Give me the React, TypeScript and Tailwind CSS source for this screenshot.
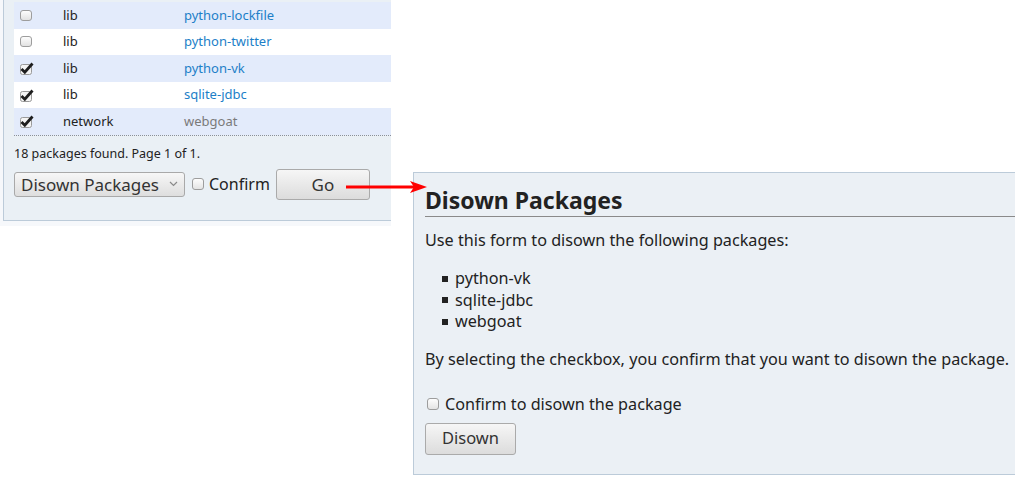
const rows = [
  { checked: false, category: 'lib', name: 'python-lockfile', muted: false },
  { checked: false, category: 'lib', name: 'python-twitter', muted: false },
  { checked: true, category: 'lib', name: 'python-vk', muted: false },
  { checked: true, category: 'lib', name: 'sqlite-jdbc', muted: false },
  { checked: true, category: 'network', name: 'webgoat', muted: true },
];

const selected = ['python-vk', 'sqlite-jdbc', 'webgoat'];

function Box({ checked }: { checked: boolean }) {
  if (checked) {
    return (
      <svg width="14" height="13" viewBox="0 0 14 13" className="block">
        <rect x="0.5" y="2.5" width="11" height="10" rx="2" fill="#f4f4f4" stroke="#9a9a9a" />
        <path d="M1.5 7 L4.8 10.2 L12.5 1.5" fill="none" stroke="#1e1e1e" strokeWidth="2.8" strokeLinejoin="miter" />
      </svg>
    );
  }
  return <span className="block h-[11px] w-[12px] rounded-[3px] border border-[#9d9d9d] bg-gradient-to-b from-[#fdfdfd] to-[#e2e2e2]" />;
}

function SmallBox() {
  return <span className="block h-[12px] w-[12px] rounded-[3px] border border-[#9d9d9d] bg-gradient-to-b from-[#fdfdfd] to-[#e4e4e4]" />;
}

export default function App() {
  return (
    <div className="relative flex h-[479px] w-[1015px] items-start overflow-hidden bg-white font-['Noto_Sans',sans-serif] text-[#222]">
      {/* list screenshot */}
      <div className="h-[226px] w-[391px] shrink-0 bg-[#f6f8fb]">
        <div className="ml-[3px] h-[221px] border-b border-l border-[#bccbd9] bg-[#eaf0f5] pt-[2px] pl-[10px]">
          <div className="border-b border-dotted border-[#8a8f99]">
            {rows.map((r, i) => (
              <div
                key={r.name}
                className={`flex h-[26.6px] items-center text-[13px] ${i % 2 === 0 ? 'bg-[#e3ebfb]' : 'bg-white'}`}
              >
                <div className="w-[49px] pl-[6px]">
                  <Box checked={r.checked} />
                </div>
                <div className="w-[121px]">{r.category}</div>
                <div className={r.muted ? 'text-[#7a7a7a]' : 'text-[#1d7fc8]'}>{r.name}</div>
              </div>
            ))}
          </div>
          <div className="mt-[9px] text-[12.5px] leading-[18px]">18 packages found. Page 1 of 1.</div>
          <div className="mt-[6px] flex items-center">
            <div className="flex h-[25px] w-[171px] items-center justify-between rounded-[3px] border border-[#a9a9a9] bg-gradient-to-b from-[#f7f7f7] to-[#dedede] pr-[6px] pl-[6px] text-[17px] text-[#333]">
              <span>Disown Packages</span>
              <svg width="9" height="6" viewBox="0 0 9 6">
                <path d="M1 1 L4.5 4.5 L8 1" fill="none" stroke="#8a8a8a" strokeWidth="1.2" />
              </svg>
            </div>
            <div className="ml-[7px]">
              <SmallBox />
            </div>
            <span className="ml-[5px] text-[16px]">Confirm</span>
            <div className="ml-[6px] flex h-[31px] w-[94px] items-center justify-center rounded-[3px] border border-[#aaa] bg-gradient-to-b from-[#f6f6f6] to-[#dcdcdc] text-[17px] text-[#333]">
              Go
            </div>
          </div>
        </div>
      </div>

      {/* arrow */}
      <svg className="absolute top-[180px] left-[346px]" width="82" height="14" viewBox="0 0 82 14">
        <rect x="0" y="5.5" width="68" height="3" fill="#f00" />
        <path d="M64 1 L81 7 L64 13 L68 7 Z" fill="#f00" />
      </svg>

      {/* disown form screenshot */}
      <div className="mt-[172px] ml-[22px] h-[303px] w-[640px] shrink-0 border border-[#bccbd9] bg-[#ebf0f5] px-[11px] pt-[12px]">
        <h2 className="border-b border-[#8a8a8a] pb-[1px] text-[23px] leading-[30px] font-bold text-[#222]">Disown Packages</h2>
        <p className="mt-[12px] text-[16.2px] leading-[22px]">Use this form to disown the following packages:</p>
        <ul className="mt-[17px] pl-[17px] text-[16.2px] leading-[21.5px]">
          {selected.map((s) => (
            <li key={s} className="flex items-center">
              <span className="mr-[7px] block h-[6px] w-[6px] bg-[#222]" />
              {s}
            </li>
          ))}
        </ul>
        <p className="mt-[15px] text-[16.2px] leading-[22px]">
          By selecting the checkbox, you confirm that you want to disown the package.
        </p>
        <label className="mt-[23px] flex items-center text-[16.2px] leading-[22px]">
          <span className="ml-[2px]">
            <SmallBox />
          </span>
          <span className="ml-[6px]">Confirm to disown the package</span>
        </label>
        <div className="mt-[8px] flex h-[32px] w-[91px] items-center justify-center rounded-[3px] border border-[#aaa] bg-gradient-to-b from-[#f6f6f6] to-[#dcdcdc] text-[16.5px] text-[#333]">
          Disown
        </div>
      </div>
    </div>
  );
}
